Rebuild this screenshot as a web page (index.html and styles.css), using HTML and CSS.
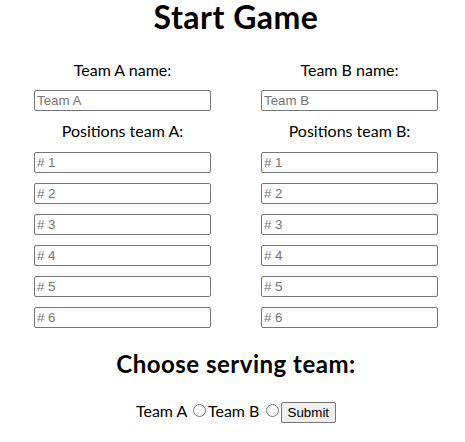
FILE: index.html
```html
<!DOCTYPE html>
<html>
<head>
<meta charset="utf-8">
<link rel="stylesheet" href="styles.css">
</head>
<body>
<h1 class="title">Start Game</h1>
<div class="teams">
  <div class="col">
    <label class="lbl">Team A name:</label>
    <input class="field name" type="text" placeholder="Team A">
    <label class="lbl">Positions team A:</label>
    <div class="positions">
      <input class="field" type="text" placeholder="# 1">
      <input class="field" type="text" placeholder="# 2">
      <input class="field" type="text" placeholder="# 3">
      <input class="field" type="text" placeholder="# 4">
      <input class="field" type="text" placeholder="# 5">
      <input class="field" type="text" placeholder="# 6">
    </div>
  </div>
  <div class="col">
    <label class="lbl">Team B name:</label>
    <input class="field name" type="text" placeholder="Team B">
    <label class="lbl">Positions team B:</label>
    <div class="positions">
      <input class="field" type="text" placeholder="# 1">
      <input class="field" type="text" placeholder="# 2">
      <input class="field" type="text" placeholder="# 3">
      <input class="field" type="text" placeholder="# 4">
      <input class="field" type="text" placeholder="# 5">
      <input class="field" type="text" placeholder="# 6">
    </div>
  </div>
</div>
<h2 class="sub">Choose serving team:</h2>
<form class="serve">Team A <input class="radio" type="radio" name="serve">Team B <input class="radio" type="radio" name="serve"><button class="btn" type="button">Submit</button></form>
</body>
</html>
```
FILE: styles.css
```css
html, body {
  margin: 0;
  padding: 0;
  background: #fff;
}
body {
  padding-left: 7px;
  font-family: Lato, "Noto Sans", sans-serif;
  color: #000;
}
.title {
  margin: 0;
  padding-top: 1px;
  font-size: 32px;
  line-height: 31px;
  font-weight: 700;
  letter-spacing: 0.5px;
  text-align: center;
}
.teams {
  display: grid;
  grid-template-columns: 177px 177px;
  column-gap: 50px;
  justify-content: center;
  margin-top: 28px;
}
.col {
  display: flex;
  flex-direction: column;
  align-items: center;
}
.lbl {
  display: block;
  font-size: 16px;
  line-height: 20px;
  white-space: nowrap;
}
.field {
  box-sizing: border-box;
  width: 177px;
  height: 21px;
  margin: 0;
  padding: 1px 2px;
  border: 1px solid #767676;
  border-radius: 2px;
  font-family: "Liberation Sans", Arial, sans-serif;
  font-size: 13.33px;
  background: #fff;
}
.field::placeholder {
  color: #757575;
}
.name {
  margin-top: 10px;
  margin-bottom: 10px;
}
.positions {
  display: flex;
  flex-direction: column;
  gap: 10px;
  margin-top: 11px;
}
.sub {
  margin: 21px 0 0;
  font-size: 24px;
  line-height: 30px;
  font-weight: 700;
  letter-spacing: 0.5px;
  text-align: center;
}
.serve {
  margin: 22px 0 0;
  font-size: 16px;
  line-height: 20px;
  text-align: center;
}
.radio {
  width: 13px;
  height: 13px;
  margin: 0 2px 0 2px;
  vertical-align: baseline;
}
.btn {
  box-sizing: border-box;
  font-family: "Liberation Sans", Arial, sans-serif;
  font-size: 13.33px;
  height: 21px;
  padding: 1px 6px;
  border: 1px solid #767676;
  border-radius: 2px;
  background: #efefef;
  color: #000;
}
```
